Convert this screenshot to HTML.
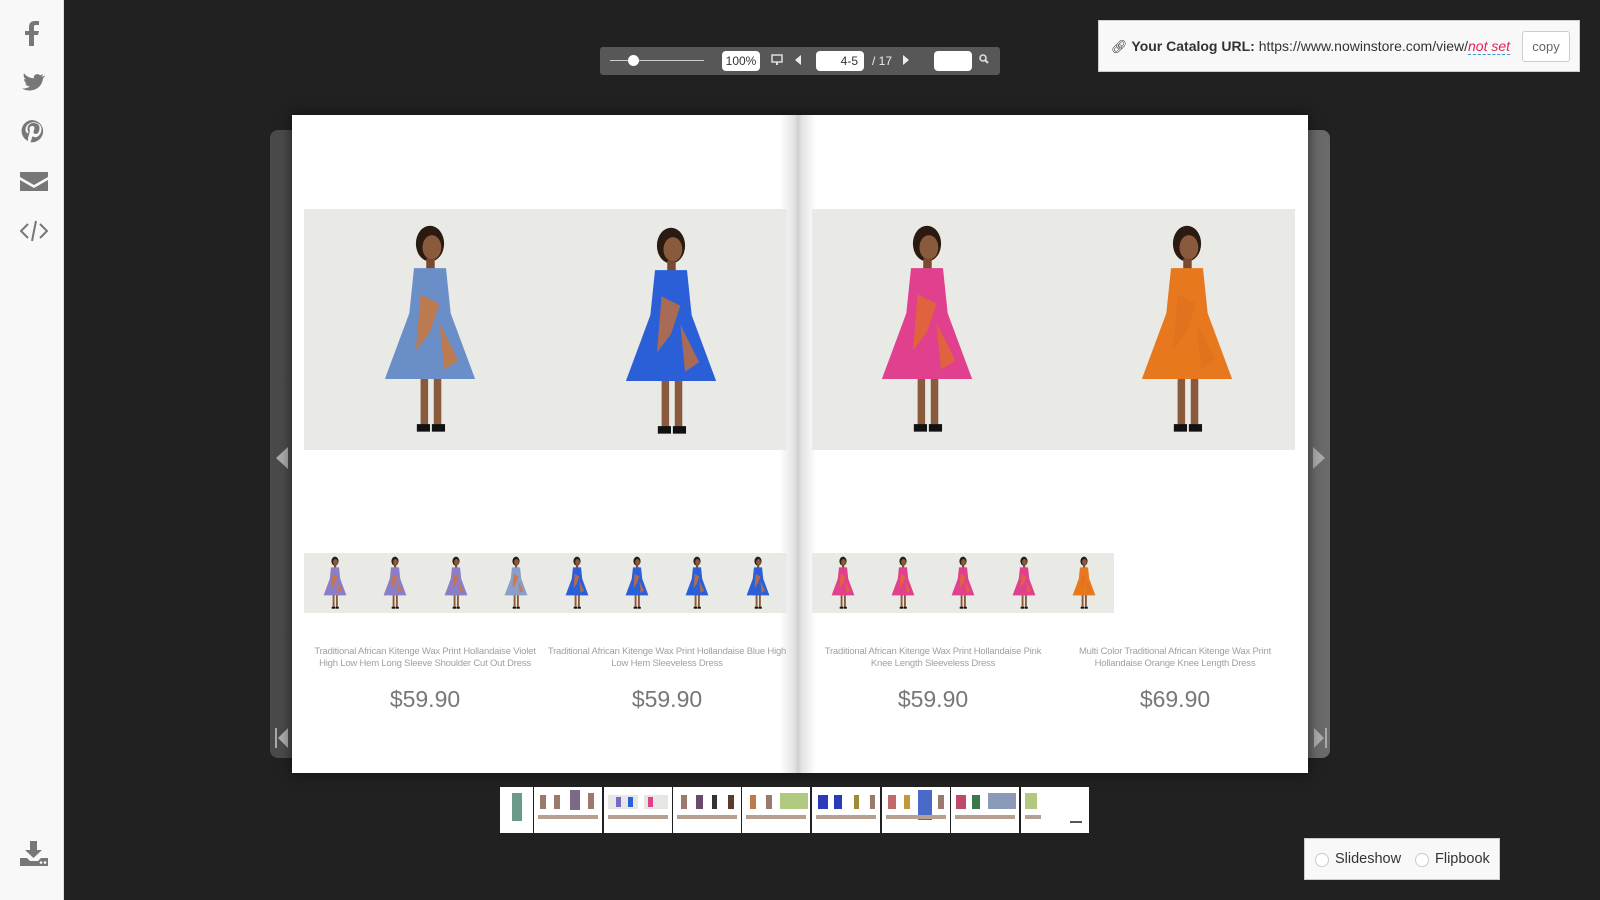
<!DOCTYPE html>
<html><head><meta charset="utf-8"><style>
*{margin:0;padding:0;box-sizing:border-box}
body{width:1600px;height:900px;background:#212121;position:relative;overflow:hidden;font-family:"Liberation Sans",sans-serif}
.abs{position:absolute}
#side{left:0;top:0;width:64px;height:900px;background:#f8f8f8;border-right:1px solid #ddd}
#tb{left:600px;top:47px;width:400px;height:28px;background:#575757;border-radius:3px}
.wb{background:#fff;border-radius:4px;font-size:12px;color:#333;line-height:20px}
#url{left:1098px;top:20px;width:482px;height:52px;background:#f8f8f8;border:1px solid #ccc}
.frame{background:linear-gradient(90deg,#4a4a4a,#6a6a6a);border-radius:8px}
.page{background:#fff}
.ttl{font-size:9.5px;color:#a0a0a0;text-align:center;line-height:12px;width:240px;letter-spacing:-0.2px}
.pr{font-size:23px;color:#777;text-align:center;width:200px;font-weight:300}
.gray{background:#e9e9e6}
</style></head><body>
<svg width="0" height="0" style="position:absolute"><defs>
<symbol id="fig" viewBox="0 0 100 240">
<ellipse cx="50" cy="26" rx="15" ry="19" fill="#2a1a12"/>
<ellipse cx="52" cy="30" rx="10" ry="13" fill="#8a5a3c"/>
<rect x="46" y="42" width="9" height="12" fill="#7a4a30"/>
<rect x="40" y="165" width="8" height="55" fill="#8a5a3c"/>
<rect x="54" y="165" width="8" height="55" fill="#8a5a3c"/>
<path d="M33 52 L67 52 L72 100 L98 170 L2 170 L28 100 Z" fill="currentColor"/>
<path d="M40 80 L60 90 L50 120 L35 140 Z M60 110 L80 150 L65 160 Z" fill="#e0701e" opacity=".7"/>
<rect x="36" y="218" width="14" height="8" fill="#111"/>
<rect x="52" y="218" width="14" height="8" fill="#111"/>
</symbol>
</defs></svg>

<div id="side" class="abs">
<svg class="abs" style="left:20px;top:20px" width="28" height="240" viewBox="0 0 28 240" fill="#777">
<path d="M9 26V15H5v-4h4V7c0-4 2-6 6-6h4v4h-3c-2 0-2 1-2 2v4h5l-1 4h-4v11z"/>
<path d="M24 56c-1 .5-2 .7-3 .8 1-.6 2-1.6 2-2.7-1 .6-2 1-3 1.2-2-2.4-7-1-6 3-4 0-8-2-10-5-1 2 0 5 2 6-1 0-2 0-2-.5 0 2 1 4 3 4.5-1 .3-2 .3-2 .1 1 2 3 3 5 3-2 1.5-5 2.4-8 2 8 5 20 1 21-10 1-1 2-2 2-3z"/>
<path d="M12 100a11 11 0 0 0-4 21c0-1 0-2 0-3l2-7s-.5-1-.5-2c0-2 1-3 3-3 1 0 2 1 2 2 0 1-1 3-1 4 0 1 1 2 2 2 3 0 4-3 4-6 0-3-2-5-6-5-4 0-6 3-6 6 0 1 .5 2 1 2.5v.5l-.5 1c0 .3-.3.3-.5.2-2-1-2-3-2-4 0-3 3-7 8-7 5 0 8 3 8 7 0 4-3 8-6 8-1 0-2-.5-3-1l-1 3c0 1-1 2-1 3a11 11 0 1 0 3-22z"/>
<path d="M0 152h28v5l-14 8-14-8z M0 160l14 8 14-8v11H0z"/>
<path d="M8 204l-7 7 7 7M20 204l7 7-7 7M16 201l-4 20" stroke="#777" stroke-width="2" fill="none"/>
</svg>
<svg class="abs" style="left:20px;top:841px" width="28" height="26" viewBox="0 0 28 26" fill="#777"><path d="M10 0h7v9h5l-8.5 8L5 9h5z"/><path d="M0 17h7l3 3h8l3-3h7v8H0z"/><circle cx="21" cy="21.5" r="1.3" fill="#fff"/><circle cx="25" cy="21.5" r="1.3" fill="#fff"/></svg>
</div>

<div id="tb" class="abs">
<div class="abs" style="left:10px;top:13px;width:94px;height:1px;background:#ccc"></div>
<div class="abs" style="left:28px;top:8px;width:11px;height:11px;border-radius:50%;background:#fff"></div>
<div class="abs wb" style="left:122px;top:4px;width:38px;height:20px;text-align:center">100%</div>
<svg class="abs" style="left:171px;top:7px" width="12" height="12" viewBox="0 0 12 12"><rect x="1" y="1" width="10" height="7" fill="none" stroke="#ddd" stroke-width="1.5"/><rect x="5" y="8" width="2" height="3" fill="#ddd"/></svg>
<svg class="abs" style="left:195px;top:8px" width="6" height="10"><path d="M6 0v10L0 5z" fill="#eee"/></svg>
<div class="abs wb" style="left:216px;top:4px;width:48px;height:20px;text-align:right;padding-right:6px">4-5</div>
<div class="abs" style="left:272px;top:4px;font-size:12px;color:#eee;line-height:20px">/ 17</div>
<svg class="abs" style="left:303px;top:8px" width="6" height="10"><path d="M0 0v10l6-5z" fill="#eee"/></svg>
<div class="abs wb" style="left:334px;top:4px;width:38px;height:20px"></div>
<svg class="abs" style="left:379px;top:7px" width="10" height="10"><circle cx="4" cy="4" r="3" fill="none" stroke="#ddd" stroke-width="1.6"/><path d="M6 6l3 3" stroke="#ddd" stroke-width="2"/></svg>
</div>

<div id="url" class="abs">
<div class="abs" style="left:12px;top:16px;font-size:14px;color:#333;white-space:nowrap;line-height:18px">
<span style="font-size:13px">&#x1F517;&#xFE0E;</span> <b>Your Catalog URL:</b> https://www.nowinstore.com/view/<i style="color:#e0245e;border-bottom:1px dashed #39c">not set</i></div>
<div class="abs" style="left:423px;top:10px;width:48px;height:31px;background:#fff;border:1px solid #ccc;border-radius:3px;font-size:13px;color:#666;text-align:center;line-height:29px">copy</div>
</div>

<div class="abs frame" style="left:270px;top:130px;width:1060px;height:628px"></div>
<svg class="abs" style="left:276px;top:447px" width="12" height="22"><path d="M12 0v22L0 11z" fill="#aaa"/></svg>
<svg class="abs" style="left:1313px;top:447px" width="12" height="22"><path d="M0 0v22l12-11z" fill="#aaa"/></svg>
<svg class="abs" style="left:275px;top:728px" width="13" height="20"><rect width="2" height="20" fill="#aaa"/><path d="M13 0v20L3 10z" fill="#aaa"/></svg>
<svg class="abs" style="left:1314px;top:728px" width="13" height="20"><rect x="11" width="2" height="20" fill="#aaa"/><path d="M0 0v20l10-10z" fill="#aaa"/></svg>

<div class="abs page" style="left:292px;top:115px;width:1016px;height:658px;box-shadow:0 0 12px rgba(0,0,0,.6)"></div>
<div class="abs" style="left:780px;top:115px;width:36px;height:658px;background:linear-gradient(90deg,#fff,#e2e2e2 40%,#d0d0d0 50%,#e4e4e4 62%,#fff)"></div>

<svg class="abs gray" style="left:304px;top:209px" width="483" height="241" viewBox="0 0 483 241">
<use href="#fig" x="79" y="10" width="94" height="226" color="#6a8fc8"/>
<use href="#fig" x="320" y="12" width="94" height="226" color="#2a5fd8"/>
</svg>
<svg class="abs gray" style="left:812px;top:209px" width="483" height="241" viewBox="0 0 483 241">
<use href="#fig" x="68" y="10" width="94" height="226" color="#e0408e"/>
<use href="#fig" x="328" y="10" width="94" height="226" color="#e8781e"/>
</svg>

<svg class="abs gray" style="left:304px;top:553px" width="483" height="60" viewBox="0 0 483 60">
<use href="#fig" x="19" y="2" width="24" height="57" color="#8a7ec8"/>
<use href="#fig" x="79" y="2" width="24" height="57" color="#8a7ec8"/>
<use href="#fig" x="140" y="2" width="24" height="57" color="#8a7ec8"/>
<use href="#fig" x="200" y="2" width="24" height="57" color="#8a9ec8"/>
<use href="#fig" x="261" y="2" width="24" height="57" color="#2a5fd8"/>
<use href="#fig" x="321" y="2" width="24" height="57" color="#2a5fd8"/>
<use href="#fig" x="381" y="2" width="24" height="57" color="#2a5fd8"/>
<use href="#fig" x="442" y="2" width="24" height="57" color="#2a5fd8"/>
</svg>
<svg class="abs gray" style="left:812px;top:553px" width="302" height="60" viewBox="0 0 302 60">
<use href="#fig" x="19" y="2" width="24" height="57" color="#e0408e"/>
<use href="#fig" x="79" y="2" width="24" height="57" color="#e0408e"/>
<use href="#fig" x="139" y="2" width="24" height="57" color="#e0408e"/>
<use href="#fig" x="200" y="2" width="24" height="57" color="#e0408e"/>
<use href="#fig" x="260" y="2" width="24" height="57" color="#e8781e"/>
</svg>

<div class="abs ttl" style="left:305px;top:646px">Traditional African Kitenge Wax Print Hollandaise Violet High Low Hem Long Sleeve Shoulder Cut Out Dress</div>
<div class="abs ttl" style="left:547px;top:646px">Traditional African Kitenge Wax Print Hollandaise Blue High Low Hem Sleeveless Dress</div>
<div class="abs ttl" style="left:813px;top:646px">Traditional African Kitenge Wax Print Hollandaise Pink Knee Length Sleeveless Dress</div>
<div class="abs ttl" style="left:1055px;top:646px">Multi Color Traditional African Kitenge Wax Print Hollandaise Orange Knee Length Dress</div>
<div class="abs pr" style="left:325px;top:686px">$59.90</div>
<div class="abs pr" style="left:567px;top:686px">$59.90</div>
<div class="abs pr" style="left:833px;top:686px">$59.90</div>
<div class="abs pr" style="left:1075px;top:686px">$69.90</div>

<svg class="abs" style="left:498px;top:787px" width="592" height="46" viewBox="0 0 592 46">
<g fill="#fff"><rect x="2" width="33" height="46"/><rect x="36" width="68" height="46"/><rect x="106" width="68" height="46"/><rect x="175" width="68" height="46"/><rect x="244" width="68" height="46"/><rect x="314" width="68" height="46"/><rect x="384" width="68" height="46"/><rect x="453" width="68" height="46"/><rect x="523" width="68" height="46"/></g>
<g fill="#9a7a6a"><rect x="14" y="6" width="10" height="28" fill="#6a9a8a"/>
<rect x="42" y="8" width="6" height="14"/><rect x="56" y="8" width="6" height="14"/><rect x="72" y="3" width="10" height="20" fill="#7a6a8a"/><rect x="90" y="6" width="6" height="16"/>
<rect x="110" y="8" width="30" height="14" fill="#e6e6e2"/><rect x="146" y="8" width="24" height="14" fill="#e6e6e2"/><rect x="118" y="10" width="5" height="10" fill="#7a6ac8"/><rect x="130" y="10" width="5" height="10" fill="#2a5fd8"/><rect x="150" y="10" width="5" height="10" fill="#e0408e"/>
<rect x="183" y="8" width="6" height="14"/><rect x="198" y="8" width="7" height="14" fill="#6a4a6a"/><rect x="214" y="8" width="5" height="14" fill="#333"/><rect x="230" y="8" width="6" height="14" fill="#5a3a2a"/>
<rect x="252" y="8" width="6" height="14" fill="#c07a4a"/><rect x="268" y="8" width="6" height="14"/><rect x="282" y="6" width="28" height="16" fill="#b0c880"/>
<rect x="320" y="8" width="10" height="14" fill="#2a3ab8"/><rect x="336" y="8" width="8" height="14" fill="#2a3ab8"/><rect x="356" y="8" width="5" height="14" fill="#a08a3a"/><rect x="372" y="8" width="5" height="14"/>
<rect x="390" y="8" width="8" height="14" fill="#c06a6a"/><rect x="406" y="8" width="6" height="14" fill="#c09a3a"/><rect x="420" y="3" width="14" height="30" fill="#4a6ac8"/><rect x="440" y="8" width="6" height="14"/>
<rect x="458" y="8" width="10" height="14" fill="#c04a6a"/><rect x="474" y="8" width="8" height="14" fill="#3a7a4a"/><rect x="490" y="6" width="28" height="16" fill="#8a9ab8"/>
<rect x="527" y="6" width="12" height="16" fill="#b0c880"/><rect x="572" y="34" width="12" height="2" fill="#555"/></g>
<g fill="#b8a090"><rect x="40" y="28" width="60" height="4"/><rect x="110" y="28" width="60" height="4"/><rect x="179" y="28" width="60" height="4"/><rect x="248" y="28" width="60" height="4"/><rect x="318" y="28" width="60" height="4"/><rect x="388" y="28" width="60" height="4"/><rect x="457" y="28" width="60" height="4"/><rect x="527" y="28" width="16" height="4"/></g>
</svg>

<div class="abs" style="left:1304px;top:838px;width:196px;height:42px;background:#f8f8f8;border:1px solid #ccc">
<div class="abs" style="left:10px;top:14px;width:14px;height:14px;border-radius:50%;border:1px solid #ccc;background:#fff"></div>
<div class="abs" style="left:30px;top:12px;font-size:14.5px;color:#333">Slideshow</div>
<div class="abs" style="left:110px;top:14px;width:14px;height:14px;border-radius:50%;border:1px solid #ccc;background:#fff"></div>
<div class="abs" style="left:130px;top:12px;font-size:14.5px;color:#333">Flipbook</div>
</div>
</body></html>
